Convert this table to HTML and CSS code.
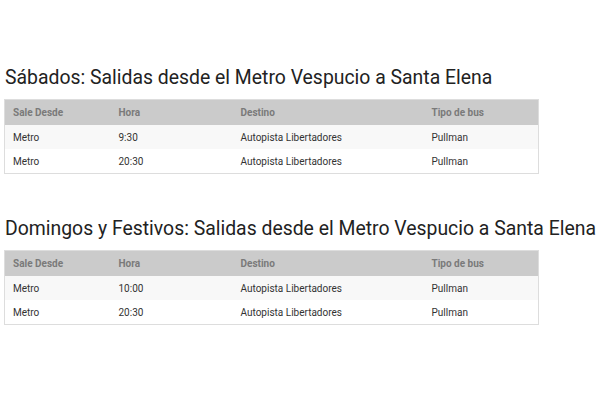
FILE: index.html
```html
<!DOCTYPE html>
<html>
<head>
<meta charset="utf-8">
<link rel="stylesheet" href="styles.css">
</head>
<body>
<div class="page">
  <section class="schedule">
    <h2 class="title">Sábados: Salidas desde el Metro Vespucio a Santa Elena</h2>
    <table class="table">
      <colgroup><col class="c1"><col class="c2"><col class="c3"><col class="c4"></colgroup>
      <thead><tr><th>Sale Desde</th><th>Hora</th><th>Destino</th><th>Tipo de bus</th></tr></thead>
      <tbody>
        <tr><td>Metro</td><td>9:30</td><td>Autopista Libertadores</td><td>Pullman</td></tr>
        <tr><td>Metro</td><td>20:30</td><td>Autopista Libertadores</td><td>Pullman</td></tr>
      </tbody>
    </table>
  </section>
  <section class="schedule">
    <h2 class="title">Domingos y Festivos: Salidas desde el Metro Vespucio a Santa Elena</h2>
    <table class="table">
      <colgroup><col class="c1"><col class="c2"><col class="c3"><col class="c4"></colgroup>
      <thead><tr><th>Sale Desde</th><th>Hora</th><th>Destino</th><th>Tipo de bus</th></tr></thead>
      <tbody>
        <tr><td>Metro</td><td>10:00</td><td>Autopista Libertadores</td><td>Pullman</td></tr>
        <tr><td>Metro</td><td>20:30</td><td>Autopista Libertadores</td><td>Pullman</td></tr>
      </tbody>
    </table>
  </section>
</div>
</body>
</html>
```
FILE: styles.css
```css
html, body { margin: 0; padding: 0; background: #fff; }
body { font-family: Roboto, "Noto Sans", sans-serif; color: #333; }
.page { padding: 65px 0 0 4px; width: 534px; }
.schedule { margin-bottom: 42px; }
.title {
  font-size: 19.4px;
  font-weight: 400;
  color: #222;
  margin: 0 0 8px 1px;
  line-height: 26px;
  white-space: nowrap;
}
.table {
  width: 534px;
  border-collapse: collapse;
  border: 1px solid #ddd;
  font-size: 10px;
  table-layout: fixed;
}
.c1 { width: 106px; }
.c2 { width: 122px; }
.c3 { width: 191px; }
.c4 { width: 115px; }
.table th {
  background: #cbcbcb;
  color: #7a7a7a;
  font-weight: 700;
  text-align: left;
  padding: 0 8px;
  height: 25px;
}
.table td {
  padding: 0 8px;
  height: 24px;
  color: #333;
}
.table tbody tr:nth-child(odd) td { background: #f8f8f8; }
.table tbody tr:nth-child(even) td { background: #fff; }
```
